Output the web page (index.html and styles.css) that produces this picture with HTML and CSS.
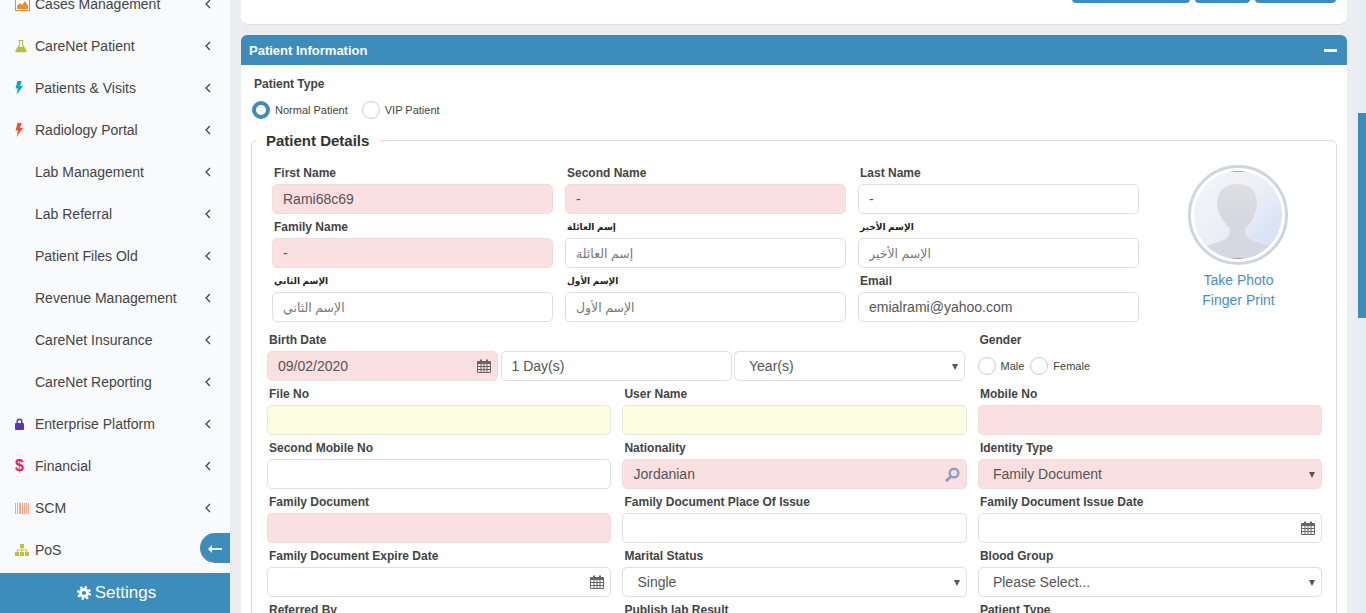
FILE: index.html
```html
<!DOCTYPE html>
<html lang="en">
<head>
  <meta charset="UTF-8" />
  <meta name="viewport" content="width=device-width, initial-scale=1.0"/>
  <title>Patient Information</title>
  <link rel="stylesheet" href="styles.css">
</head>
<body>

  <!-- shared icons -->
  <svg class="defs" width="0" height="0">
    <symbol id="chev" viewBox="0 0 6 10"><path d="M5 1L1 5l4 4" fill="none" stroke="#444" stroke-width="1.3"/></symbol>
    <symbol id="calendar" viewBox="0 0 14 14"><path fill-rule="evenodd" d="M1 2h2V.5h2V2h4V.5h2V2h2a1 1 0 0 1 1 1v10a1 1 0 0 1-1 1H1a1 1 0 0 1-1-1V3a1 1 0 0 1 1-1zM1 5v2h2.500V5zm3.500 0v2h2V5zm3 0v2h2V5zm3 0v2H13V5zM1 8v2h2.500V8zm3.500 0v2h2V8zm3 0v2h2V8zm3 0v2H13V8zM1 11v2h2.500v-2zm3.500 0v2h2v-2zm3 0v2h2v-2zm3 0v2H13v-2z" fill="#666"/></symbol>
  </svg>

  <aside class="sidebar">
    <ul class="menu">
      <li><svg width="15" height="13" viewBox="0 0 15 13"><rect x=".5" y=".5" width="14" height="12" fill="#fff" stroke="#f58a2c"/><path d="M2 11V8l2.500-3L7 7l3-4 3 5v3z" fill="#f58a2c"/></svg><span class="menu-text">Cases Management</span><svg width="6" height="10"><use href="#chev"/></svg></li>
      <li><svg width="12" height="13" viewBox="0 0 12 13"><path fill-rule="evenodd" d="M3.500 0h5v1H8v3.500l3.600 6.300a1 1 0 0 1-.9 1.500H1.300a1 1 0 0 1-.9-1.500L4 4.500V1h-.5zM5 1v3.800L3.800 6.800h4.400L7 4.800V1z" fill="#b5c334"/></svg><span class="menu-text">CareNet Patient</span><svg width="6" height="10"><use href="#chev"/></svg></li>
      <li><svg width="8" height="14" viewBox="0 0 8 14"><path d="M2.500 0h4L5 5h3L1.500 14 3 7.500H.5z" fill="#00a9c9"/></svg><span class="menu-text">Patients &amp; Visits</span><svg width="6" height="10"><use href="#chev"/></svg></li>
      <li><svg width="8" height="14" viewBox="0 0 8 14"><path d="M2.500 0h4L5 5h3L1.500 14 3 7.500H.5z" fill="#f4502a"/></svg><span class="menu-text">Radiology Portal</span><svg width="6" height="10"><use href="#chev"/></svg></li>
      <li><span class="menu-text">Lab Management</span><svg width="6" height="10"><use href="#chev"/></svg></li>
      <li><span class="menu-text">Lab Referral</span><svg width="6" height="10"><use href="#chev"/></svg></li>
      <li><span class="menu-text">Patient Files Old</span><svg width="6" height="10"><use href="#chev"/></svg></li>
      <li><span class="menu-text">Revenue Management</span><svg width="6" height="10"><use href="#chev"/></svg></li>
      <li><span class="menu-text">CareNet Insurance</span><svg width="6" height="10"><use href="#chev"/></svg></li>
      <li><span class="menu-text">CareNet Reporting</span><svg width="6" height="10"><use href="#chev"/></svg></li>
      <li><svg width="9" height="12" viewBox="0 0 9 12"><path fill-rule="evenodd" d="M1.500 5V3.500a3 3 0 0 1 6 0V5H8a1 1 0 0 1 1 1v5a1 1 0 0 1-1 1H1a1 1 0 0 1-1-1V6a1 1 0 0 1 1-1zM3 5h3V3.500a1.500 1.500 0 0 0-3 0z" fill="#5e35b1"/></svg><span class="menu-text">Enterprise Platform</span><svg width="6" height="10"><use href="#chev"/></svg></li>
      <li><span class="dollar">$</span><span class="menu-text">Financial</span><svg width="6" height="10"><use href="#chev"/></svg></li>
      <li><svg width="14" height="11" viewBox="0 0 14 11" fill="#f9a58c"><rect x="0" width="1" height="11"/><rect x="2" width="1" height="11"/><rect x="4" width="2" height="11"/><rect x="7" width="1" height="11"/><rect x="9" width="1" height="11"/><rect x="11" width="1" height="11"/><rect x="13" width="1" height="11"/></svg><span class="menu-text">SCM</span><svg width="6" height="10"><use href="#chev"/></svg></li>
      <li><svg width="14" height="12" viewBox="0 0 14 12" fill="#bcc43a"><rect x="5" width="4" height="4"/><rect y="8" width="4" height="4"/><rect x="5" y="8" width="4" height="4"/><rect x="10" y="8" width="4" height="4"/><path d="M6.500 4h1v1.500H12V8h-1V6.500H7.500V8h-1V6.500H3V8H2V5.500h4.500z"/></svg><span class="menu-text">PoS</span></li>
    </ul>
    <button class="collapse" type="button"><svg width="14" height="8" viewBox="0 0 14 8"><path d="M4 0v3h10v2H4v3L0 4z" fill="#fff"/></svg></button>
    <div class="settings">
      <svg width="14" height="14" viewBox="0 0 14 14"><circle cx="7" cy="7" r="3.600" fill="none" stroke="#fff" stroke-width="3"/><circle cx="7" cy="7" r="5.800" fill="none" stroke="#fff" stroke-width="2.400" stroke-dasharray="2.300 2.250"/></svg>
      <span>Settings</span>
    </div>
  </aside>

  <main class="content">
    <div class="top-card">
      <button class="top-btn btn-a" type="button"></button>
      <button class="top-btn btn-b" type="button"></button>
      <button class="top-btn btn-c" type="button"></button>
    </div>

    <section class="panel">
      <div class="panel-head">
        <span>Patient Information</span>
        <span class="minus"></span>
      </div>
      <div class="panel-body">
        <div class="type-label">Patient Type</div>
        <div class="radios">
          <span class="radio checked"></span><span class="radio-text">Normal Patient</span>
          <span class="radio vip"></span><span class="radio-text">VIP Patient</span>
        </div>

        <fieldset class="details">
          <legend>Patient Details</legend>

          <div class="name-block">
            <div class="name-grid">
              <div class="field"><label>First Name</label><input class="req" value="Rami68c69"></div>
              <div class="field"><label>Second Name</label><input class="req" value="-"></div>
              <div class="field"><label>Last Name</label><input value="-"></div>
              <div class="field"><label>Family Name</label><input class="req" value="-"></div>
              <div class="field"><label class="ar">إسم العائلة</label><input placeholder="إسم العائلة"></div>
              <div class="field"><label class="ar">الإسم الأخير</label><input placeholder="الإسم الأخير"></div>
              <div class="field"><label class="ar">الإسم الثاني</label><input placeholder="الإسم الثاني"></div>
              <div class="field"><label class="ar">الإسم الأول</label><input placeholder="الإسم الأول"></div>
              <div class="field"><label>Email</label><input value="emialrami@yahoo.com"></div>
            </div>
            <div class="photo">
              <div class="avatar">
                <svg width="88" height="88" viewBox="0 0 88 88">
                  <defs>
                    <linearGradient id="avatarBg" x1="0" y1="0" x2="1" y2="1">
                      <stop offset="0" stop-color="#f6f6fb"/>
                      <stop offset=".5" stop-color="#eceef5"/>
                      <stop offset=".75" stop-color="#dbe4f6"/>
                    </linearGradient>
                    <linearGradient id="avatarBody" x1="0" y1="0" x2="0" y2="1">
                      <stop offset="0" stop-color="#e0e0e2"/>
                      <stop offset=".45" stop-color="#d6d7e0"/>
                    </linearGradient>
                    <clipPath id="avatarClip"><circle cx="44" cy="44" r="44"/></clipPath>
                  </defs>
                  <g clip-path="url(#avatarClip)">
                    <rect width="88" height="88" fill="url(#avatarBg)"/>
                    <path d="M13 75L28 70C33 68 36 66 36 58C30 52 23 42 23 32C23 20 31 13 43 13C55 13 63 20 63 32C63 42 57 52 51 58C51 66 54 68 60 70L75 75V88H13z" fill="url(#avatarBody)"/>
                    <rect x="37" width="14" height="1" fill="#999"/>
                    <rect x="37" y="87" width="14" height="1" fill="#999"/>
                  </g>
                </svg>
              </div>
              <a href="#">Take Photo</a>
              <a href="#">Finger Print</a>
            </div>
          </div>

          <div class="birth-row">
            <div class="field">
              <label>Birth Date</label>
              <div class="wrap">
                <input class="req" value="09/02/2020">
                <svg class="cal" width="14" height="14"><use href="#calendar"/></svg>
              </div>
            </div>
            <div class="field"><label>&nbsp;</label><input value="1 Day(s)"></div>
            <div class="field">
              <label>&nbsp;</label>
              <div class="wrap caret"><select><option>Year(s)</option></select></div>
            </div>
            <div class="field gender">
              <label>Gender</label>
              <div class="radios small">
                <span class="radio"></span><span class="radio-text">Male</span>
                <span class="radio"></span><span class="radio-text">Female</span>
              </div>
            </div>
          </div>

          <div class="form-grid">
            <div class="field"><label>File No</label><input class="auto"></div>
            <div class="field"><label>User Name</label><input class="auto"></div>
            <div class="field"><label>Mobile No</label><input class="req"></div>

            <div class="field"><label>Second Mobile No</label><input></div>
            <div class="field">
              <label>Nationality</label>
              <div class="wrap">
                <input class="req" value="Jordanian">
                <svg class="cal" width="16" height="15" viewBox="0 0 16 15"><circle cx="10" cy="6" r="4.300" fill="none" stroke="#8aa0c0" stroke-width="2.400"/><path d="M7 9.500L2 14" stroke="#8aa0c0" stroke-width="3" fill="none"/></svg>
              </div>
            </div>
            <div class="field">
              <label>Identity Type</label>
              <div class="wrap caret"><select class="req"><option>Family Document</option></select></div>
            </div>

            <div class="field"><label>Family Document</label><input class="req"></div>
            <div class="field"><label>Family Document Place Of Issue</label><input></div>
            <div class="field">
              <label>Family Document Issue Date</label>
              <div class="wrap">
                <input>
                <svg class="cal" width="14" height="14"><use href="#calendar"/></svg>
              </div>
            </div>

            <div class="field">
              <label>Family Document Expire Date</label>
              <div class="wrap">
                <input>
                <svg class="cal" width="14" height="14"><use href="#calendar"/></svg>
              </div>
            </div>
            <div class="field">
              <label>Marital Status</label>
              <div class="wrap caret"><select><option>Single</option></select></div>
            </div>
            <div class="field">
              <label>Blood Group</label>
              <div class="wrap caret"><select><option>Please Select...</option></select></div>
            </div>

            <div class="field"><label>Referred By</label><input></div>
            <div class="field"><label>Publish lab Result</label><input></div>
            <div class="field"><label>Patient Type</label><input></div>
          </div>
        </fieldset>
      </div>
    </section>
  </main>

  <div class="scrollbar"><div class="thumb"></div></div>

</body>
</html>
```

FILE: styles.css
```css
html, body {
  height: 100%;
}
body {
  margin: 0;
  display: flex;
  overflow: hidden;
  background: #ebedf0;
  color: #444;
  font-family: "Liberation Sans", "DejaVu Sans", sans-serif;
  font-size: 14px;
}
.defs {
  position: absolute;
}

/* left menu */
.sidebar {
  position: relative;
  width: 230px;
  flex: none;
  height: 100vh;
  display: flex;
  flex-direction: column;
  background: #f9fafc;
}
.menu {
  flex: 1;
  min-height: 0;
  margin: -17px 0 0;
  padding: 0;
  list-style: none;
  overflow: hidden;
}
.menu li {
  height: 42px;
  padding: 0 19px 0 15px;
  display: grid;
  grid-template-columns: 20px 1fr 6px;
  align-items: center;
  box-sizing: border-box;
}
.menu-text {
  grid-column: 2;
}
.dollar {
  color: #e91e63;
  font-size: 16px;
  font-weight: bold;
}
.collapse {
  position: absolute;
  right: 0;
  top: 533px;
  width: 30px;
  height: 30px;
  padding: 0;
  border: 0;
  border-radius: 15px 0 0 15px;
  background: #3c8dbc;
}
.settings {
  height: 40px;
  flex: none;
  padding-left: 3px;
  display: flex;
  align-items: center;
  justify-content: center;
  gap: 4px;
  background: #3c8dbc;
  color: #fff;
  font-size: 17px;
}

/* main column */
.content {
  flex: 1;
  min-width: 0;
  height: 100vh;
  padding: 0 11px;
  overflow: hidden;
}
.top-card {
  height: 25px;
  padding-right: 11px;
  display: flex;
  justify-content: flex-end;
  align-items: flex-end;
  gap: 5px;
  box-sizing: border-box;
  background: #fff;
  border-bottom: 1px solid #dcdfe3;
  border-radius: 0 0 8px 8px;
}
.top-btn {
  height: 30px;
  margin-bottom: 21px;
  flex: none;
  border: 0;
  border-radius: 4px;
  background: #3c8dbc;
}
.btn-a { width: 118px; }
.btn-b { width: 55px; }
.btn-c { width: 81px; }

.panel {
  margin-top: 10px;
  background: #fff;
  border-radius: 6px 6px 0 0;
}
.panel-head {
  height: 30px;
  padding: 0 10px 0 8px;
  display: flex;
  align-items: center;
  justify-content: space-between;
  background: #3c8dbc;
  border-radius: 6px 6px 0 0;
  color: #fff;
  font-size: 13px;
  font-weight: bold;
}
.minus {
  width: 13px;
  height: 3px;
  background: #fff;
}
.panel-body {
  padding: 9px 10px 0;
}
.type-label {
  margin-left: 3px;
  font-size: 12px;
  font-weight: bold;
  line-height: 20px;
}
.radios {
  height: 26px;
  margin: 3px 0 8px 1px;
  display: flex;
  align-items: center;
  font-size: 11px;
}
.radio {
  width: 18px;
  height: 18px;
  flex: none;
  box-sizing: border-box;
  border: 1px solid #ccc;
  border-radius: 50%;
  background: #fff;
}
.radio.checked {
  border: 4px solid #3c8dbc;
}
.radio-text {
  margin: 0 4px 0 5px;
}
.vip {
  margin-left: 10px;
}

/* form */
.details {
  margin: 0;
  padding: 0 0 30px;
  min-width: 0;
  border: 1px solid #ddd;
  border-radius: 6px;
}
.details legend {
  height: 18px;
  margin-left: 4px;
  padding: 0 10px;
  color: #333;
  font-size: 15px;
  font-weight: bold;
  line-height: 20px;
}
.name-block {
  padding-top: 11px;
  display: flex;
}
.name-grid {
  margin-left: 20px;
  width: 867px;
  flex: none;
  display: grid;
  grid-template-columns: repeat(3, 281px);
  column-gap: 12px;
}
.photo {
  flex: 1;
  padding: 5px 0 0 2px;
  display: flex;
  flex-direction: column;
  align-items: center;
  line-height: 20px;
}
.photo a {
  color: #4a8fc4;
  text-decoration: none;
}
.avatar {
  width: 100px;
  height: 100px;
  margin: 0 0 5px -2px;
  box-sizing: border-box;
  padding: 3px;
  border: 3px solid #cfd5de;
  border-radius: 50%;
  background: #fff;
}
.avatar svg {
  display: block;
}
.field label {
  display: block;
  height: 24px;
  padding-left: 2px;
  box-sizing: border-box;
  font-size: 12px;
  font-weight: bold;
  line-height: 27px;
}
.field label.ar {
  font-size: 9px;
  color: #222;
}
.field input,
.field select {
  display: block;
  width: 100%;
  height: 30px;
  box-sizing: border-box;
  margin: 0;
  padding: 0 10px;
  border: 1px solid #e0e0e0;
  border-radius: 5px;
  background: #fff;
  color: #555;
  font-family: inherit;
  font-size: 14px;
  outline: 0;
}
.field input::placeholder {
  color: #777;
  font-size: 12.5px;
}
.field select {
  padding-left: 14px;
  appearance: none;
}
.field .req {
  background: #fae0e0;
  border-color: #f0dcdc;
}
.field .auto {
  background: #fdfde2;
  border-color: #e8e8d8;
}
.wrap {
  position: relative;
}
.cal {
  position: absolute;
  right: 7px;
  top: 8px;
}
.caret::after {
  content: "";
  position: absolute;
  right: 7px;
  top: 13px;
  border-style: solid;
  border-width: 6px 3px 0;
  border-color: #555 transparent transparent;
}
.birth-row {
  margin: 5px 15px 0 15px;
  display: grid;
  grid-template-columns: repeat(3, 231px) 1fr;
  column-gap: 2.500px;
}
.gender {
  margin-left: 10px;
}
.radios.small {
  height: 30px;
  margin: 0;
}
.radios.small .radio-text {
  margin-right: 6px;
}
.form-grid {
  margin: 0 14px 0 15px;
  display: grid;
  grid-template-columns: repeat(3, 1fr);
  column-gap: 11.400px;
}

.scrollbar {
  width: 8px;
  flex: none;
  height: 100vh;
  background: #e3edf3;
}
.thumb {
  margin-top: 113px;
  height: 205px;
  background: #3c8dbc;
}
```
